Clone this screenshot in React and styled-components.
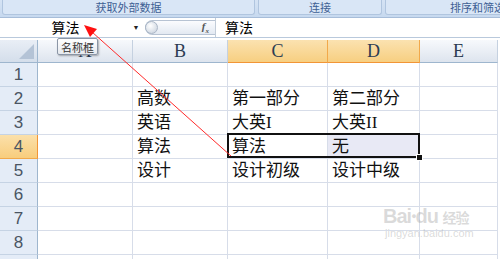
import styled, { createGlobalStyle } from "styled-components"

const GlobalStyle = createGlobalStyle`
  html, body { margin: 0; padding: 0; background: #fff; }
  body { width: 500px; height: 259px; overflow: hidden; }
`

const columns = [
  { key: "A", width: 95 },
  { key: "B", width: 95 },
  { key: "C", width: 100, active: true },
  { key: "D", width: 92, active: true },
  { key: "E", width: 78 },
]

const rows = [
  [],
  ["", "高数", "第一部分", "第二部分"],
  ["", "英语", "大英I", "大英II"],
  ["", "算法", "算法", "无"],
  ["", "设计", "设计初级", "设计中级"],
  [],
  [],
  [],
  [],
]

const App = () => {
  return (
    <>
      <GlobalStyle />
      <Page>
        <Ribbon>
          <Group $w={253}>获取外部数据</Group>
          <Group $w={124}>连接</Group>
          <Group $w={120} $align="flex-start">排序和筛选</Group>
        </Ribbon>
        <FormulaBar>
          <NameBox>
            <NameText>算法</NameText>
            <Caret>▼</Caret>
          </NameBox>
          <Pill>
            <Knob />
            <Fx>f<sub>x</sub></Fx>
          </Pill>
          <FormulaInput>算法</FormulaInput>
        </FormulaBar>
        <Sheet>
          <Corner>
            <CornerMark />
          </Corner>
          {columns.map((c) => (
            <ColHead key={c.key} $active={c.active}>{c.key}</ColHead>
          ))}
          {rows.map((r, i) => (
            <Row key={i} r={r} n={i + 1} />
          ))}
          <Selection />
          <Handle />
        </Sheet>
        <Tip>名称框</Tip>
        <Arrow width="500" height="259" viewBox="0 0 500 259">
          <line x1="231" y1="156" x2="92" y2="32" stroke="#ff2a2a" strokeWidth="1" />
          <polygon points="84,25 97,29 90,37" fill="#ff1010" />
        </Arrow>
        <Watermark>
          <Brand>Bai<Paw>●</Paw>du <Small>经验</Small></Brand>
          <Url>jingyan.baidu.com</Url>
        </Watermark>
      </Page>
    </>
  )
}

const Row = ({ r, n }) => {
  return (
    <>
      <RowHead $active={n === 4}>{n}</RowHead>
      {columns.map((c, j) => (
        <Cell key={c.key} $fill={n === 4 && c.key === "D"}>{r[j] || ""}</Cell>
      ))}
    </>
  )
}

const Page = styled.div`
  position: relative;
  width: 500px;
  height: 259px;
  overflow: hidden;
  background: #fff;
`

const Ribbon = styled.div`
  display: flex;
  gap: 3px;
  height: 18px;
  padding: 0 0 0 2px;
  box-sizing: border-box;
  background: linear-gradient(#d5e3f4, #c7d9ef);
  border-bottom: 1px solid #a7bdd9;
`

const Group = styled.div`
  flex: 0 0 ${(p) => p.$w}px;
  height: 15px;
  display: flex;
  align-items: center;
  justify-content: ${(p) => p.$align || "center"};
  padding-left: ${(p) => (p.$align ? "64px" : "0")};
  box-sizing: border-box;
  border: 1px solid #b0c5df;
  border-top: none;
  border-radius: 0 0 3px 3px;
  background: #d9e6f6;
  font: 11px "Noto Sans CJK SC", sans-serif;
  line-height: 13px;
  color: #3e5f94;
  white-space: nowrap;
`

const FormulaBar = styled.div`
  display: flex;
  align-items: center;
  height: 19px;
  background: #fff;
  border-bottom: 1px solid #b9c9dc;
`

const NameBox = styled.div`
  flex: 0 0 145px;
  display: flex;
  align-items: center;
  height: 100%;
`

const NameText = styled.div`
  flex: 1;
  text-align: center;
  font: 14px "Noto Sans CJK SC", sans-serif;
  color: #000;
  padding-left: 2px;
  line-height: 19px;
`

const Caret = styled.div`
  width: 14px;
  font-size: 7px;
  color: #222;
  text-align: center;
  margin-right: 2px;
`

const Pill = styled.div`
  flex: 0 0 70px;
  height: 15px;
  display: flex;
  align-items: center;
  justify-content: space-between;
  border: 1px solid #b7c3d3;
  border-right: none;
  border-radius: 9px 0 0 9px;
  background: linear-gradient(#fbfcfe, #e3e9f2);
  box-sizing: border-box;
`

const Knob = styled.div`
  width: 13px;
  height: 13px;
  border-radius: 50%;
  background: radial-gradient(circle at 40% 35%, #ffffff, #c4cedb);
  border: 1px solid #aab6c6;
  margin-left: -1px;
  box-sizing: border-box;
`

const Fx = styled.div`
  font: italic bold 11px "Liberation Serif", serif;
  color: #555;
  padding-right: 6px;
  sub { font-size: 7px; }
`

const FormulaInput = styled.div`
  flex: 1;
  height: 100%;
  border-left: 1px solid #c2ccd8;
  padding-left: 9px;
  font: 14px "Noto Sans CJK SC", sans-serif;
  line-height: 19px;
  color: #000;
`

const Sheet = styled.div`
  position: relative;
  margin-top: 2px;
  display: grid;
  grid-template-columns: 38px ${columns.map((c) => c.width + "px").join(" ")};
  grid-template-rows: 23px;
  grid-auto-rows: 24px;
`

const Corner = styled.div`
  position: relative;
  background: linear-gradient(#e9eef6, #d4deeb);
  border-right: 1px solid #9eb6ce;
  border-bottom: 1px solid #9eb6ce;
  box-sizing: border-box;
`

const CornerMark = styled.div`
  position: absolute;
  right: 3px;
  bottom: 3px;
  width: 0;
  height: 0;
  border-left: 15px solid transparent;
  border-bottom: 15px solid #b4c3d6;
`

const ColHead = styled.div`
  display: flex;
  align-items: center;
  justify-content: center;
  box-sizing: border-box;
  font: 18px "Liberation Serif", serif;
  color: #2c3c52;
  background: ${(p) =>
    p.$active ? "linear-gradient(#fbe2b0, #f7cf81)" : "linear-gradient(#f7f9fc, #dde4ee)"};
  border-right: 1px solid ${(p) => (p.$active ? "#f2a94a" : "#c5d1e0")};
  border-bottom: 1px solid ${(p) => (p.$active ? "#f29536" : "#9eb6ce")};
`

const RowHead = styled.div`
  display: flex;
  align-items: center;
  justify-content: center;
  box-sizing: border-box;
  font: 17px "Liberation Sans", sans-serif;
  color: #4a5563;
  background: ${(p) => (p.$active ? "linear-gradient(#fbe0aa, #f8cd7d)" : "#e4ecf7")};
  border-right: 1px solid ${(p) => (p.$active ? "#f29536" : "#9eb6ce")};
  border-bottom: 1px solid ${(p) => (p.$active ? "#f2a94a" : "#c5d3e4")};
`

const Cell = styled.div`
  box-sizing: border-box;
  border-right: 1px solid #d7dde9;
  border-bottom: 1px solid #d7dde9;
  background: ${(p) => (p.$fill ? "#e8e9f5" : "#fff")};
  padding-left: 4px;
  font: 17px "Liberation Serif", "Noto Sans CJK SC", serif;
  line-height: 23px;
  color: #111;
  white-space: nowrap;
  overflow: hidden;
`

const Selection = styled.div`
  position: absolute;
  left: 227px;
  top: 93px;
  width: 193px;
  height: 25px;
  border: 2px solid #111;
  box-sizing: border-box;
  pointer-events: none;
`

const Handle = styled.div`
  position: absolute;
  left: 416px;
  top: 114px;
  width: 5px;
  height: 5px;
  background: #111;
  border: 1px solid #fff;
`

const Tip = styled.div`
  position: absolute;
  left: 57px;
  top: 38px;
  padding: 0 3px;
  height: 15px;
  line-height: 15px;
  font: 11px "Noto Sans CJK SC", sans-serif;
  color: #333;
  background: linear-gradient(#ffffff, #e6e9ee);
  border: 1px solid #8b96a6;
  border-radius: 2px;
  box-shadow: 1px 1px 2px rgba(0, 0, 0, 0.3);
`

const Arrow = styled.svg`
  position: absolute;
  left: 0;
  top: 0;
  pointer-events: none;
`

const Watermark = styled.div`
  position: absolute;
  left: 383px;
  top: 205px;
  display: flex;
  flex-direction: column;
  align-items: flex-start;
  color: rgba(150, 150, 150, 0.35);
  pointer-events: none;
`

const Brand = styled.div`
  font: bold 20px "Liberation Sans", sans-serif;
  line-height: 22px;
  letter-spacing: -1px;
`

const Paw = styled.span`
  font-size: 9px;
  vertical-align: top;
`

const Small = styled.span`
  font: bold 14px "Noto Sans CJK SC", sans-serif;
`

const Url = styled.div`
  font: 11px "Liberation Sans", sans-serif;
  margin-left: 2px;
`

export default App
